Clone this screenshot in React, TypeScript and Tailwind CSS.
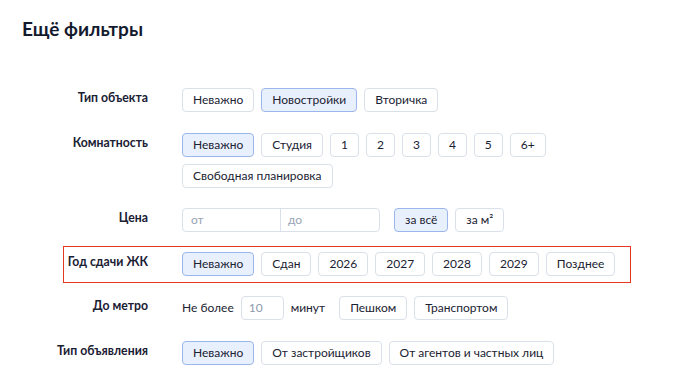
import React from "react";

const Btn = ({ children, active = false }: { children: React.ReactNode; active?: boolean }) => (
  <div
    className={
      "h-[24px] px-[10px] flex items-center rounded-[4px] border text-[12px] whitespace-nowrap " +
      (active
        ? "bg-[#e9f0fd] border-[#9bb6ea] text-[#1a2232]"
        : "bg-white border-[#d9e0ea] text-[#1a2232]")
    }
  >
    {children}
  </div>
);

const Row = ({ label, children, className = "" }: { label: string; children: React.ReactNode; className?: string }) => (
  <div className={"relative flex " + className}>
    <div className="w-[126px] shrink-0 text-right text-[12.25px] font-bold text-[#1a2033] leading-[18px] pt-[1px]">
      {label}
    </div>
    <div className="ml-[34px] flex flex-wrap gap-x-[7px] gap-y-[7px] items-center w-[480px]">{children}</div>
  </div>
);

export default function App() {
  return (
    <div
      className="w-[700px] h-[387px] bg-white overflow-hidden pl-[22px] pt-[17px]"
      style={{ fontFamily: "Lato, 'Noto Sans', sans-serif" }}
    >
      <h1 className="text-[19px] font-bold text-[#141a2e] leading-[24px]">Ещё фильтры</h1>
      <div className="mt-[47px] flex flex-col gap-[20px]">
        <Row label="Тип объекта">
          <Btn>Неважно</Btn>
          <Btn active>Новостройки</Btn>
          <Btn>Вторичка</Btn>
        </Row>
        <Row label="Комнатность" className="mt-[1px]">
          <Btn active>Неважно</Btn>
          <Btn>Студия</Btn>
          <Btn>1</Btn>
          <Btn>2</Btn>
          <Btn>3</Btn>
          <Btn>4</Btn>
          <Btn>5</Btn>
          <Btn>6+</Btn>
          <Btn>Свободная планировка</Btn>
        </Row>
        <Row label="Цена">
          <div className="flex h-[24px] w-[198px] mr-[7px] rounded-[4px] border border-[#d9e0ea] text-[12px] text-[#98a3b3]">
            <div className="w-1/2 flex items-center pl-[8px] border-r border-[#d9e0ea]">от</div>
            <div className="w-1/2 flex items-center pl-[7px]">до</div>
          </div>
          <Btn active>за всё</Btn>
          <Btn>за м²</Btn>
        </Row>
        <Row label="Год сдачи ЖК">
          <div className="absolute left-[41px] top-[-6px] w-[568px] h-[37px] border-[1.5px] border-[#e5391f] pointer-events-none" />
          <Btn active>Неважно</Btn>
          <Btn>Сдан</Btn>
          <Btn>2026</Btn>
          <Btn>2027</Btn>
          <Btn>2028</Btn>
          <Btn>2029</Btn>
          <Btn>Позднее</Btn>
        </Row>
        <Row label="До метро">
          <span className="text-[12px] text-[#1a2232]">Не более</span>
          <div className="h-[24px] w-[43px] rounded-[4px] border border-[#d9e0ea] flex items-center pl-[7px] text-[12px] text-[#8d99ab]">
            10
          </div>
          <span className="text-[12px] text-[#1a2232] mr-[7px]">минут</span>
          <Btn>Пешком</Btn>
          <Btn>Транспортом</Btn>
        </Row>
        <Row label="Тип объявления" className="mt-[1px]">
          <Btn active>Неважно</Btn>
          <Btn>От застройщиков</Btn>
          <Btn>От агентов и частных лиц</Btn>
        </Row>
      </div>
    </div>
  );
}
